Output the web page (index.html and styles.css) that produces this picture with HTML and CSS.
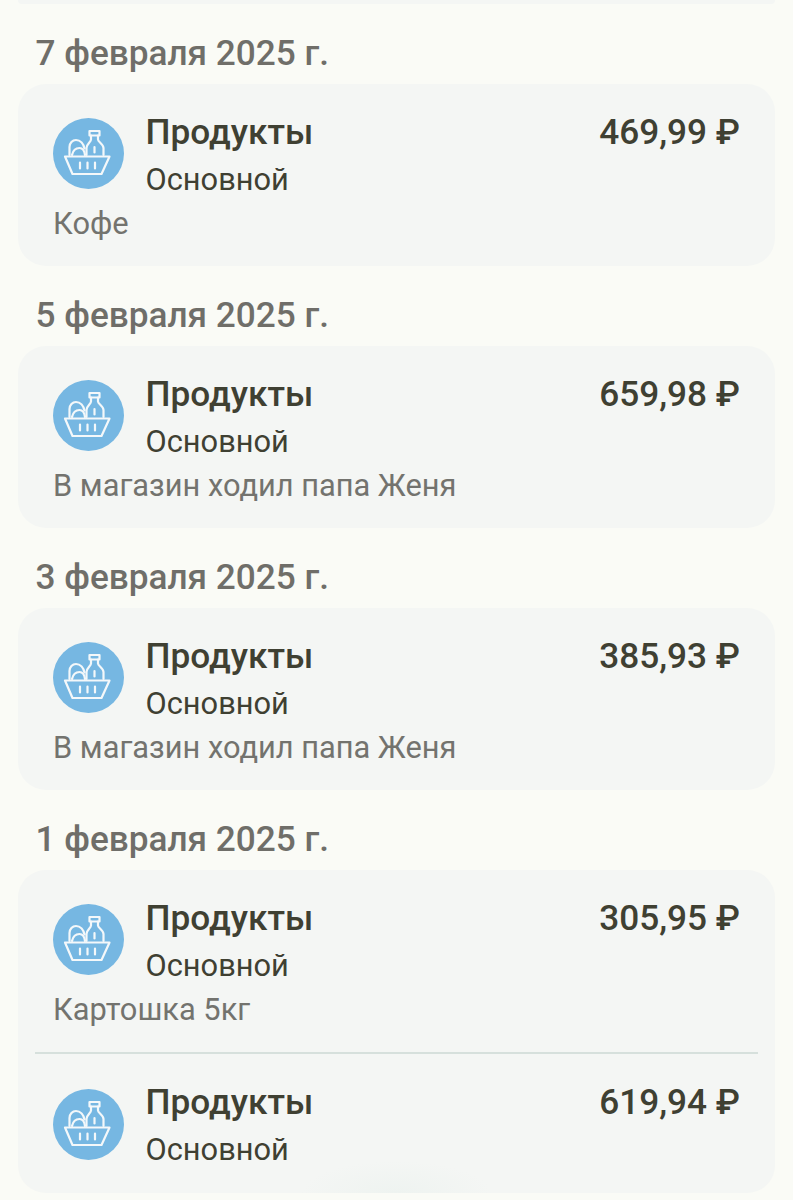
FILE: index.html
```html
<!DOCTYPE html>
<html lang="ru">
<head>
    <meta charset="UTF-8">
    <meta name="viewport" content="width=device-width, initial-scale=1.0">
    <title>Операции</title>
    <link rel="stylesheet" href="styles.css">
</head>
<body>
    <svg class="sprite" width="0" height="0">
        <symbol id="basket" viewBox="9 8 71 71">
            <circle cx="44.5" cy="43.5" r="35.5" fill="#76b7e2"/>
            <g fill="none" stroke="#f4f8fa" stroke-width="2.200" stroke-linecap="round" stroke-linejoin="round">
                <path d="M21 46.500H65.500L57.500 64H28.500Z"/>
                <path d="M36 52.500V58.500M43.500 52.500V58.500M51 52.500V58.500"/>
                <path d="M25.500 45V37C25.500 33 28.500 30 32 30C36.500 30 39.500 34 40.500 38.500"/>
                <path d="M28 45C29 40.500 32 38 35.500 38C38.500 38 40.500 41 41 45"/>
                <path d="M47 25.500V29.500C47 32 42.500 34 42.500 38V45M54 25.500V29.500C54 32 59.500 34 59.500 38V45"/>
                <path d="M45.500 21H55.500V25.500H45.500Z"/>
                <path d="M50.500 37V42.500"/>
            </g>
        </symbol>
    </svg>

    <div class="top-card"></div>

    <h2 class="date">7 февраля 2025 г.</h2>
    <section class="card">
        <div class="item">
            <div class="item-main">
                <svg class="icon"><use href="#basket"/></svg>
                <div class="item-text">
                    <div class="title">Продукты</div>
                    <div class="account">Основной</div>
                </div>
                <div class="amount">469,99 ₽</div>
            </div>
            <div class="note">Кофе</div>
        </div>
    </section>

    <h2 class="date">5 февраля 2025 г.</h2>
    <section class="card">
        <div class="item">
            <div class="item-main">
                <svg class="icon"><use href="#basket"/></svg>
                <div class="item-text">
                    <div class="title">Продукты</div>
                    <div class="account">Основной</div>
                </div>
                <div class="amount">659,98 ₽</div>
            </div>
            <div class="note">В магазин ходил папа Женя</div>
        </div>
    </section>

    <h2 class="date">3 февраля 2025 г.</h2>
    <section class="card">
        <div class="item">
            <div class="item-main">
                <svg class="icon"><use href="#basket"/></svg>
                <div class="item-text">
                    <div class="title">Продукты</div>
                    <div class="account">Основной</div>
                </div>
                <div class="amount">385,93 ₽</div>
            </div>
            <div class="note">В магазин ходил папа Женя</div>
        </div>
    </section>

    <h2 class="date">1 февраля 2025 г.</h2>
    <section class="card card-last">
        <div class="item">
            <div class="item-main">
                <svg class="icon"><use href="#basket"/></svg>
                <div class="item-text">
                    <div class="title">Продукты</div>
                    <div class="account">Основной</div>
                </div>
                <div class="amount">305,95 ₽</div>
            </div>
            <div class="note">Картошка 5кг</div>
        </div>
        <div class="item">
            <div class="item-main">
                <svg class="icon"><use href="#basket"/></svg>
                <div class="item-text">
                    <div class="title">Продукты</div>
                    <div class="account">Основной</div>
                </div>
                <div class="amount">619,94 ₽</div>
            </div>
        </div>
    </section>
</body>
</html>
```

FILE: styles.css
```css
* {
box-sizing: border-box;
margin: 0;
padding: 0;
}

body {
background: #fafbf6;
font-family: "Roboto", "Liberation Sans", sans-serif;
height: 1200px;
overflow: hidden;
}

.sprite {
display: block;
height: 0;
}

.top-card {
height: 4px;
margin: 0 18px;
background: #f4f6f4;
border-radius: 0 0 28px 28px;
}

.date {
font-size: 35.2px;
font-weight: 500;
line-height: 40px;
color: #6f6e69;
padding-left: 35.500px;
margin-top: 29px;
margin-bottom: 11px;
}

.card {
margin: 0 18px;
padding: 0 17px;
background: #f4f6f4;
border-radius: 28px;
}

.card-last {
background: radial-gradient(ellipse 95px 32px at 50% 100%, #eef3f0, transparent), #f4f6f4;
}

.item {
padding: 28px 18px 21px;
height: 182px;
}

.item-main {
display: flex;
align-items: flex-start;
}

.icon {
width: 71px;
height: 71px;
margin-top: 6px;
flex-shrink: 0;
}

.item-text {
flex: 1;
margin-left: 21.500px;
}

.title {
font-size: 35.2px;
font-weight: 500;
line-height: 40px;
color: #3f4032;
}

.account {
font-size: 30.8px;
line-height: 36px;
margin-top: 10px;
color: #3f4032;
}

.amount {
font-size: 35.2px;
font-weight: 500;
line-height: 40px;
color: #3f4032;
}

.note {
font-size: 30.8px;
line-height: 36px;
color: #73736e;
margin-top: 8px;
}

.item + .item {
border-top: 2px solid #d6e0dc;
padding-top: 28px;
height: 139px;
}

.item + .item .icon {
margin-top: 7px;
}

.card-last .item + .item {
height: 141px;
}
```
